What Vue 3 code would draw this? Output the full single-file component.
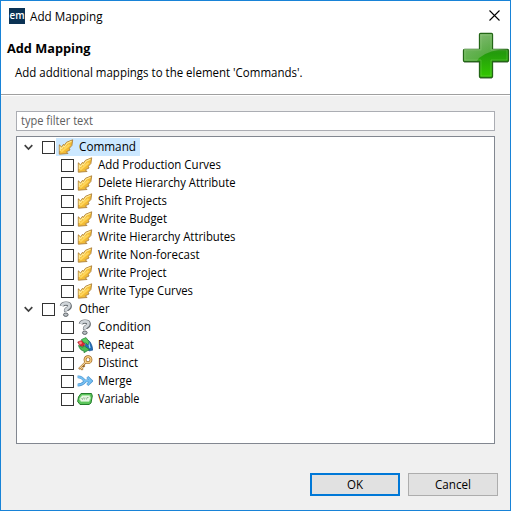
<script setup>
const groups = [
  { name: 'Command', w: 57, icon: 'command', selected: true, items: [
    { name: 'Add Production Curves', w: 123, icon: 'command' },
    { name: 'Delete Hierarchy Attribute', w: 137.500, icon: 'command' },
    { name: 'Shift Projects', w: 69, icon: 'command' },
    { name: 'Write Budget', w: 69, icon: 'command' },
    { name: 'Write Hierarchy Attributes', w: 137.500, icon: 'command' },
    { name: 'Write Non-forecast', w: 101.500, icon: 'command' },
    { name: 'Write Project', w: 68.500, icon: 'command' },
    { name: 'Write Type Curves', w: 95, icon: 'command' }
  ] },
  { name: 'Other', w: 30.500, icon: 'question', items: [
    { name: 'Condition', w: 53, icon: 'question' },
    { name: 'Repeat', w: 36, icon: 'repeat' },
    { name: 'Distinct', w: 40, icon: 'key' },
    { name: 'Merge', w: 34, icon: 'merge' },
    { name: 'Variable', w: 41.500, icon: 'variable' }
  ] }
]
const rows = groups.flatMap(g => [{ ...g, root: true }, ...g.items])
</script>

<template>
  <div class="dialog">
    <header class="header">
      <div class="titlebar">
        <span class="logo"><svg width="16" height="16"><text x="0.5" y="10.5" textLength="15" lengthAdjust="spacingAndGlyphs">em</text></svg></span>
        <svg class="label title" width="80" height="18"><text x="0" y="13" textLength="72.500" lengthAdjust="spacingAndGlyphs">Add Mapping</text></svg>
        <svg class="close" width="11" height="11" viewBox="0 0 11 11"><path d="M.5 .5 10.5 10.5M10.5 .5 .5 10.5" stroke="#000" stroke-width="1.100" fill="none" /></svg>
      </div>
      <div class="intro">
        <div class="copy">
          <svg class="label bold" width="100" height="18"><text x="0" y="13" textLength="83.500" lengthAdjust="spacingAndGlyphs">Add Mapping</text></svg>
          <svg class="label message" width="300" height="18"><text x="0" y="13" textLength="287.500" lengthAdjust="spacingAndGlyphs">Add additional mappings to the element 'Commands'.</text></svg>
        </div>
        <svg class="plus" width="48" height="48" viewBox="0 0 48 48">
          <defs>
            <linearGradient id="pg" x1="0" y1="0" x2="0" y2="1"><stop offset="0" stop-color="#4e9a3c" /><stop offset=".45" stop-color="#249b0c" /><stop offset="1" stop-color="#33c900" /></linearGradient>
            <linearGradient id="ps" x1="0" y1="0" x2="1" y2="1"><stop offset="0" stop-color="#a5cd98" /><stop offset="1" stop-color="#3e9e28" /></linearGradient>
            <clipPath id="pc"><path d="M18 2h12v15h16v12H30v16H18V29H2V17h16z" /></clipPath>
          </defs>
          <path d="M18 2.500h12v15.500h16v13H30v16H18v-16H2V18h16z" fill="#000" opacity=".22" />
          <path d="M18.500 1.500h11q1 0 1 1v15h15q1 0 1 1v10q0 1-1 1h-15v15q0 1-1 1h-11q-1 0-1-1v-15h-15q-1 0-1-1v-10q0-1 1-1h15v-15q0-1 1-1z" fill="url(#pg)" stroke="#236616" stroke-width="1.300" />
          <path d="M0 0h48v17Q28 17 17 26Q14 30 14 32H0z" fill="url(#ps)" opacity=".75" clip-path="url(#pc)" />
          <path d="M19 3h10v15h16v10H29v16H19V28H3V18h16z" fill="none" stroke="#b0e29b" stroke-width=".8" opacity=".3" />
        </svg>
      </div>
    </header>

    <main class="body">
      <div class="filter"><svg class="label" width="90" height="18"><text x="0" y="13" textLength="72" lengthAdjust="spacingAndGlyphs">type filter text</text></svg></div>
      <div class="tree">
        <div v-for="row in rows" :key="row.name" class="row" :class="{ root: row.root, selected: row.selected }">
          <svg v-if="row.root" class="chevron" width="9" height="7" viewBox="0 0 9 7"><path d="M.7 1.200 4.500 5 8.300 1.200" fill="none" stroke="#404040" stroke-width="1.700" /></svg>
          <span class="check"></span>
          <span class="entry">
            <svg class="icon" width="16" height="16" viewBox="0 0 16 16">
              <g v-if="row.icon === 'command'">
                <path d="M14.700 .8 8.500 3.300 6.300 6.300 5.500 5.300 3.600 8 1.300 5.800 1.300 15.200 10 14.500 8.300 12.800 12 11 11.300 9.300 13.900 6.500z" fill="#f3bc35" stroke="#ad8140" stroke-width=".9" stroke-linejoin="round" />
                <path d="M13.500 2.300 9.200 4.300 6.500 8 5.500 7 3.800 9.600 2.300 8.300V12" fill="none" stroke="#ffe995" stroke-width="1.100" />
                <path d="M3.200 12.800 11.500 5.800" stroke="#ffd65c" stroke-width="1.800" />
              </g>
              <g v-else-if="row.icon === 'question'" fill="none" stroke-linejoin="round">
                <path d="M3.800 5Q4.500 2.600 8 2.600T11.700 5Q11.700 6.700 9.700 7.800T8.200 10.500" stroke="#666c71" stroke-width="4.400" />
                <path d="M3.800 4.800Q4.500 2.300 8 2.300T11.400 4.800Q11.400 6.500 9.400 7.600T7.900 10.300" stroke="#d0d5d9" stroke-width="2.800" />
                <ellipse cx="7.800" cy="13.700" rx="2.300" ry="1.700" fill="#bbc1c5" stroke="#5d6368" />
              </g>
              <g v-else-if="row.icon === 'repeat'">
                <path d="M10 3q4 0 6 10l-4 1-4-5z" fill="#236eb8" stroke="#174b87" stroke-width=".6" />
                <path d="M11.300 4.500 13 11" stroke="#a5def5" stroke-width="1.200" />
                <path d="M.7 5 4.500 3.500 8 5.500 7 10 3 9z" fill="#dc2430" stroke="#a32c30" stroke-width=".6" />
                <path d="M4.500 2.500 9 .6 12 4.500 11 8 9 6 7 6z" fill="#5ccb62" stroke="#238436" stroke-width=".7" />
                <path d="M1.500 8.500 6 10.500 6.500 8.500 12.500 12.500 7 15.700V14Q3 13.500 1.500 8.500z" fill="#4cbb55" stroke="#1b7930" stroke-width=".7" />
                <circle cx="3.500" cy="6" r="1.400" fill="#ff8585" />
              </g>
              <g v-else-if="row.icon === 'key'" fill="none" stroke-linejoin="round">
                <path d="M9 7 2 14M3.500 12.500 5.800 14.800M5.800 10.200 7.500 11.900" stroke="#976322" stroke-width="2.300" />
                <circle cx="11" cy="4.700" r="3" stroke="#976322" stroke-width="2.800" />
                <circle cx="11" cy="4.700" r="3" stroke="#f6cb7d" stroke-width="1.400" />
                <path d="M8.900 6.900 2.400 13.400M3.600 12.400 5.500 14.300" stroke="#f9d899" stroke-width="1.100" />
              </g>
              <g v-else-if="row.icon === 'merge'" fill="none" stroke-linejoin="miter">
                <path d="M.7 3.800Q5 3.600 7.500 7.800H13M.7 12Q5 12 8 8.500M10.300 4 14.500 8 10.300 12" stroke="#4c94d0" stroke-width="2.800" />
                <path d="M.7 3.800Q5 3.800 7.500 7.800H13.500M.7 12Q5 12 8 8.500M10.500 4.300 14.200 8 10.500 11.700" stroke="#76c0f2" stroke-width="1.700" />
              </g>
              <g v-else>
                <path d="M4 2.500H14.500L15.300 5 14 12 12 13.500H3L.7 10.500 1.500 6z" fill="#5bc65b" stroke="#257d2c" />
                <path d="M5 4.500H12.500L13.500 7 12 10.500H4L2.500 8z" fill="#e5f7e2" stroke="#b0e5ac" stroke-width=".7" />
                <path d="M4.500 7 5.500 8.500 6.500 6.500M8 6.500 7.500 8.500M9.500 8.500 10 6.500 11.500 6.500" stroke="#648a64" stroke-width=".6" fill="none" />
              </g>
            </svg>
            <svg class="label" :width="row.w + 3" height="18"><text x="0" y="13" :textLength="row.w" lengthAdjust="spacingAndGlyphs">{{ row.name }}</text></svg>
          </span>
        </div>
      </div>
      <footer class="actions">
        <button class="primary"><svg class="label" width="16" height="18"><text x="0" y="13" textLength="16" lengthAdjust="spacingAndGlyphs">OK</text></svg></button>
        <button><svg class="label" width="36" height="18"><text x="0" y="13" textLength="36" lengthAdjust="spacingAndGlyphs">Cancel</text></svg></button>
      </footer>
    </main>
  </div>
</template>

<style>
body { margin: 0; overflow: hidden; }
</style>
<style scoped>
* { box-sizing: border-box; }
svg { display: block; flex: none; }
.dialog { width: 511px; height: 511px; border: 1px solid #1883d7; background: #f0f0f0; display: flex; flex-direction: column; font: 12px "Open Sans", "Noto Sans", sans-serif; color: #000; }
.label { overflow: visible; fill: currentColor; }
.header { height: 95px; flex: none; background: #fff; border-bottom: 1px solid #fff; box-shadow: inset 0 -1px #a0a0a0; }
.titlebar { height: 29px; display: flex; align-items: center; padding: 0 10px 0 8px; }
.logo { width: 16px; height: 16px; background: #0b3254; margin-right: 5px; fill: #fff; font-weight: 600; font-size: 11px; }
.title { margin-top: 2px; }
.close { margin-left: auto; }
.intro { height: 65px; display: flex; justify-content: space-between; }
.copy { padding: 10px 0 0 6px; }
.bold { font-weight: 700; font-size: 13px; }
.message { margin: 6px 0 0 8px; }
.plus { margin-top: 2px; }
.body { flex: 1; padding: 15px 15px 0; display: flex; flex-direction: column; }
.filter { height: 20px; background: #fff; border: 1px solid #abadb3; padding-left: 4px; color: #606060; }
.tree { height: 308px; margin-top: 5px; background: #fff; border: 1px solid #828790; padding-top: 1px; }
.row { height: 18px; display: flex; align-items: center; padding-left: 44px; }
.root { padding-left: 7px; }
.chevron { margin-right: 9px; }
.check { width: 13px; height: 13px; border: 1px solid #333; background: #fff; margin-right: 1px; }
.entry { height: 18px; display: flex; align-items: center; padding: 0 1px 0 2px; }
.icon { margin-right: 5px; }
.selected .entry { background: #cce8ff; }
.actions { display: flex; justify-content: flex-end; gap: 8px; margin: 29px -3px 0 0; }
button { width: 90px; height: 23px; background: #e1e1e1; border: 1px solid #adadad; padding: 0; display: flex; justify-content: center; align-items: center; font: inherit; color: #000; }
.primary { border: 2px solid #0078d7; }
</style>
